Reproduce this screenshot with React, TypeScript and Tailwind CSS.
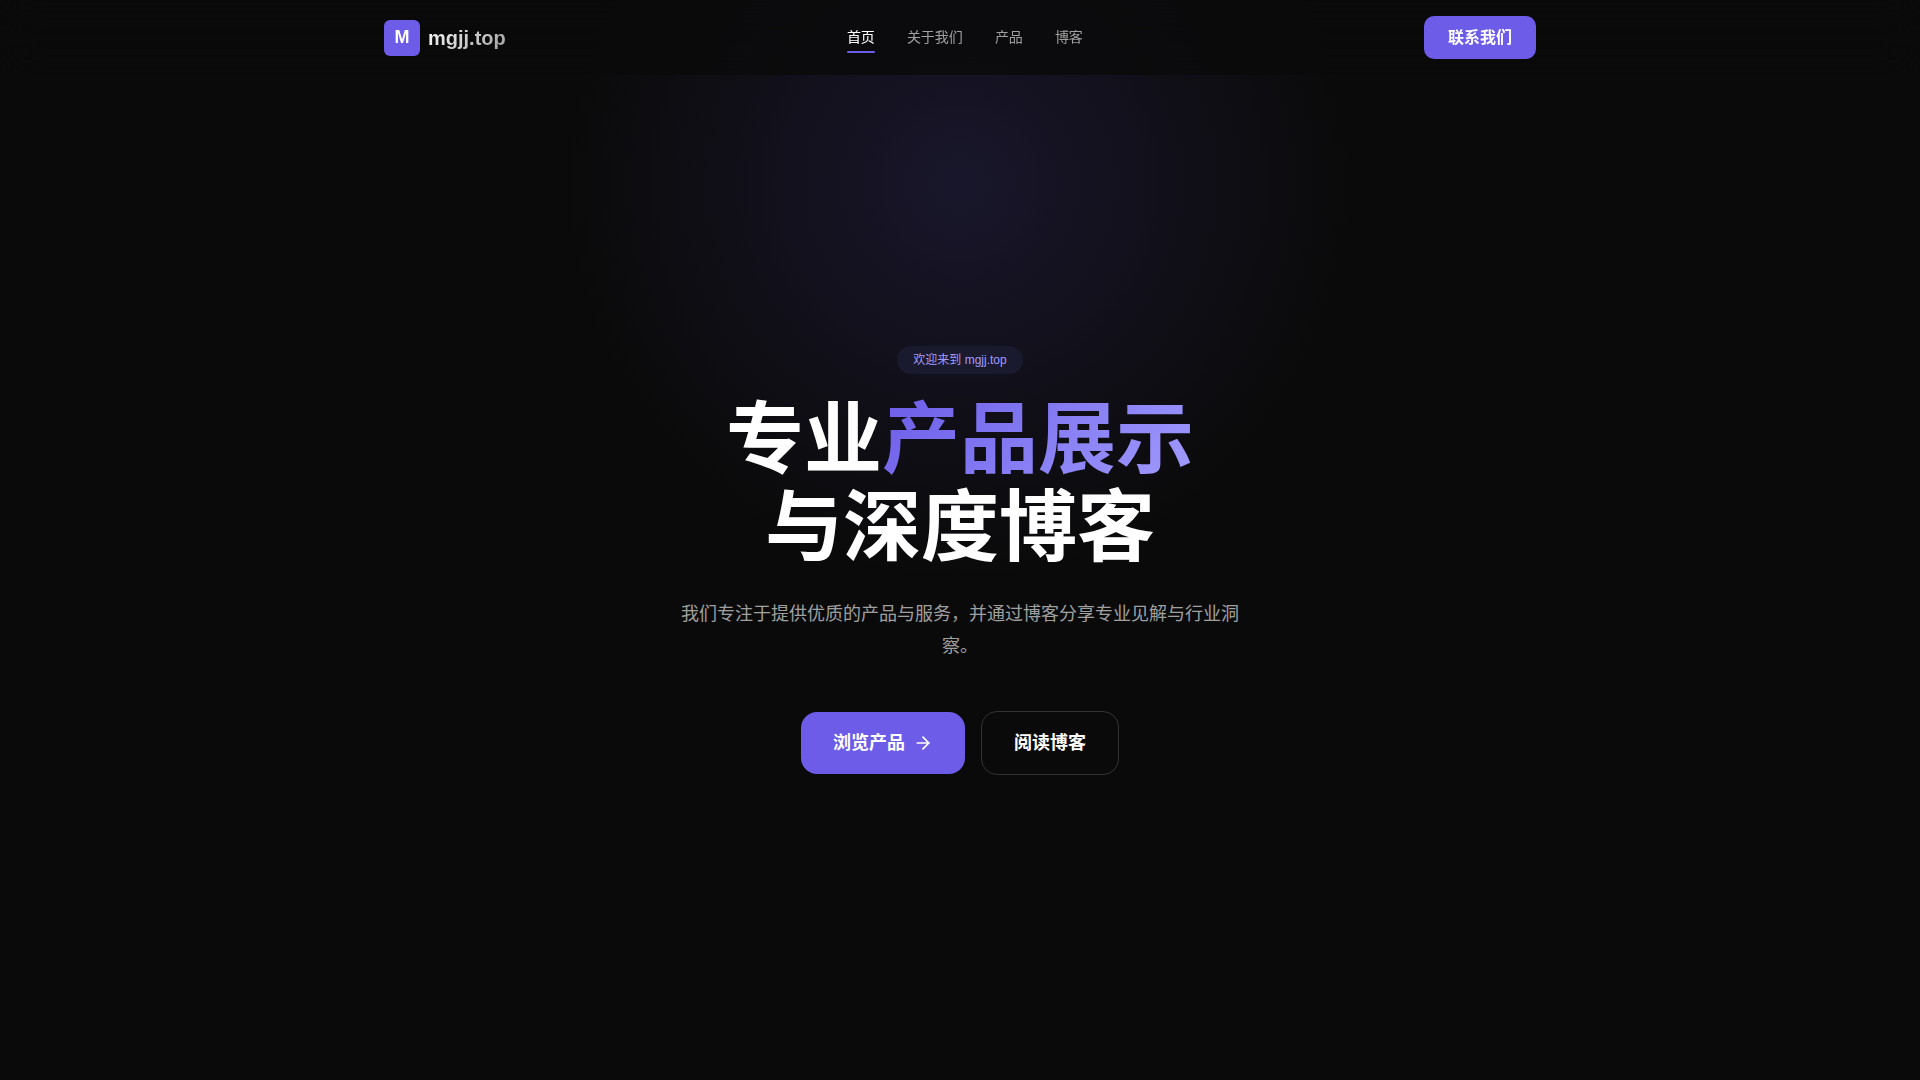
import { ArrowRight } from 'lucide-react';

const navItems = [
  { label: '首页', href: '#home', active: true },
  { label: '关于我们', href: '#about' },
  { label: '产品', href: '#products' },
  { label: '博客', href: '#blog' },
];

function Header() {
  return (
    <header className="fixed inset-x-0 top-0 z-50 bg-[#0a0a0a]/80 backdrop-blur-[20px]">
      <div className="mx-auto flex max-w-[1200px] items-center justify-between px-6 py-4 leading-normal">
        <a href="#home" className="flex items-center gap-2">
          <span className="flex size-9 items-center justify-center rounded-md bg-[#6c5ce7] pb-px text-lg leading-none font-bold">
            M
          </span>
          <span className="bg-linear-135 from-white to-[#a0a0a0] bg-clip-text text-xl font-bold text-transparent">
            mgjj.top
          </span>
        </a>

        <nav className="flex items-center gap-8">
          {navItems.map((item) => (
            <a
              key={item.label}
              href={item.href}
              className={
                item.active
                  ? 'relative pb-0.5 text-sm text-white after:absolute after:inset-x-0 after:-bottom-1 after:h-0.5 after:rounded-full after:bg-[#6c5ce7]'
                  : 'relative pb-0.5 text-sm text-[#a0a0a0] hover:text-white'
              }
            >
              {item.label}
            </a>
          ))}
        </nav>

        <button
          type="button"
          className="rounded-[10px] bg-[#6c5ce7] px-6 py-[10px] text-base leading-[23px] font-semibold"
        >
          联系我们
        </button>
      </div>
    </header>
  );
}

function Hero() {
  return (
    <section
      id="home"
      className="relative flex min-h-screen items-center justify-center overflow-hidden px-6 pt-[120px] pb-20"
    >
      {/* Glow */}
      <div className="pointer-events-none absolute -top-[20%] left-1/2 size-[800px] -translate-x-1/2 bg-[radial-gradient(circle,rgba(108,92,231,0.15)_0%,transparent_70%)]" />

      <div className="relative flex flex-col items-center text-center">
        <span className="rounded-full bg-[#1a1a2e] px-4 py-1.5 text-xs text-[#a29bfe]">
          欢迎来到 mgjj.top
        </span>
        <h1 className="mt-[22px] text-[78px] leading-[88px] font-bold">
          专业
          <span className="bg-linear-135 from-[#6c5ce7] to-[#a29bfe] bg-clip-text text-transparent">
            产品展示
          </span>
          <br />
          与深度博客
        </h1>
        <p className="mt-[26px] max-w-[560px] text-lg leading-8 text-[#a0a0a0]">
          我们专注于提供优质的产品与服务，并通过博客分享专业见解与行业洞察。
        </p>
        <div className="mt-12 flex items-center gap-4 pt-px">
          <a
            href="#products"
            className="flex items-center gap-2 rounded-2xl bg-[#6c5ce7] px-8 py-[18px] text-lg leading-[26px] font-semibold"
          >
            浏览产品
            <ArrowRight size={20} />
          </a>
          <a
            href="#blog"
            className="rounded-2xl border border-[#333] px-8 py-[18px] text-lg leading-[26px] font-semibold"
          >
            阅读博客
          </a>
        </div>
      </div>
    </section>
  );
}

export default function App() {
  return (
    <div className="min-h-screen bg-[#0a0a0a] font-['Liberation_Sans','Noto_Sans_CJK_SC',sans-serif] text-white">
      <Header />
      <Hero />
    </div>
  );
}
